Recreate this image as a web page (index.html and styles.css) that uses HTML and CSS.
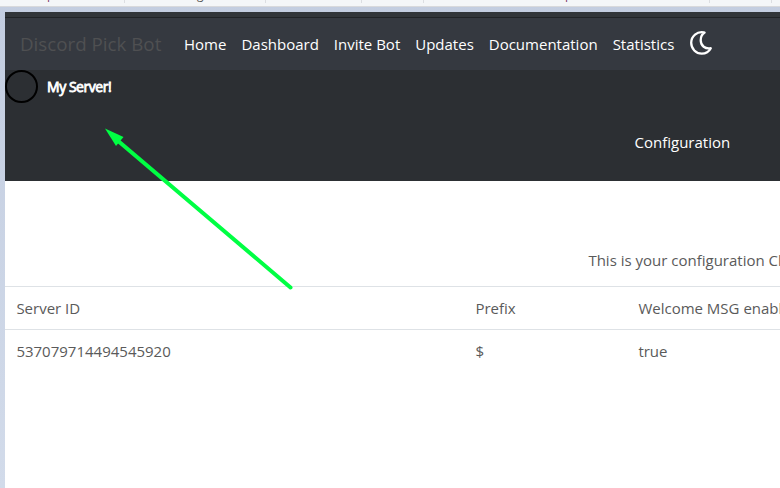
FILE: index.html
```html
<!DOCTYPE html>
<html lang="en">
<head>
<meta charset="utf-8">
<title>Discord Pick Bot</title>
<link rel="stylesheet" href="styles.css">
</head>
<body>
<div class="bookmarks">
  <span class="bookmark first">p</span>
  <span class="bookmark second">g</span>
  <span class="bookmark third"></span>
  <span class="bookmark fourth"></span>
  <span class="bookmark fifth">p</span>
  <span class="bookmark sixth"></span>
</div>
<main class="page">
  <div class="top-strip"></div>
  <nav class="navbar">
    <a class="brand">Discord Pick Bot</a>
    <div class="links">
      <a>Home</a><a>Dashboard</a><a>Invite Bot</a><a>Updates</a><a>Documentation</a><a>Statistics</a>
    </div>
    <svg class="moon" viewBox="0 0 24 26"><path d="M14.8 2.4C8.2 1.1 2.2 6 2.2 12.8c0 6 4.7 10.8 10.5 10.8 4.1 0 7.3-1.9 9.1-5.4-5.5 1.1-10.1-2.4-10.1-7.9 0-3.5 1.1-6 3.9-7.7Z"/></svg>
  </nav>
  <header class="server-header">
    <div class="server"><span class="avatar"></span><span class="server-name">My Server!</span></div>
    <a class="config-tab">Configuration</a>
  </header>
  <p class="intro">This is your configuration Click</p>
  <div class="table">
    <div class="row"><span>Server ID</span><span>Prefix</span><span>Welcome MSG enabled</span></div>
    <div class="row"><span>537079714494545920</span><span>$</span><span>true</span></div>
  </div>
</main>
<svg class="arrow" viewBox="0 0 780 488"><path class="shaft" d="M117 140L290.5 287.5"/><path class="head" d="M105 128.5L123.5 137 116 146Z"/></svg>
</body>
</html>
```
FILE: styles.css
```css
* { box-sizing: border-box; }
body {
  margin: 0;
  width: 780px;
  height: 488px;
  overflow: hidden;
  background: linear-gradient(#c3cde0, #d2dbea);
  font: 15px/21px "Open Sans", sans-serif;
  color: #5a5a5a;
}
.bookmarks {
  display: flex;
  height: 7px;
  overflow: hidden;
  background: #f4f6f8;
  border-bottom: 1px solid #d8d9dc;
}
.bookmark {
  height: 16px;
  margin-top: -13px;
  flex: none;
  overflow: hidden;
  border-right: 1px solid #dcdee2;
  font-size: 12px;
  line-height: 16px;
  color: #803a66;
}
.first { width: 125px; padding-left: 47px; }
.second { width: 141px; padding-left: 72px; color: #555; }
.third { width: 96px; }
.fourth { width: 62px; }
.fifth { width: 286px; padding-left: 141px; }
.sixth { width: 62px; }
.page {
  margin: 5px 0 0 5px;
  width: 775px;
  height: 476px;
  background: #fff;
  overflow: hidden;
}
.top-strip { height: 6px; background: #313539; border-bottom: 1px solid #202326; }
.navbar {
  display: flex;
  align-items: center;
  height: 52px;
  padding-left: 15px;
  background: #353940;
}
.brand { width: 164px; margin-top: -2px; font-size: 18.75px; color: #4f5052; white-space: nowrap; }
.links { display: flex; gap: 15px; color: #fff; white-space: nowrap; }
.moon { width: 24px; height: 26px; margin: -2px 0 0 15px; fill: none; stroke: #fff; stroke-width: 2.3; stroke-linejoin: round; }
.server-header { height: 111px; background: #2c2f33; color: #fff; }
.server { display: flex; height: 33px; align-items: center; gap: 9px; }
.server-name { font-size: 14px; letter-spacing: -.45px; -webkit-text-stroke: .8px #fff; margin-top: -1px; }
.avatar { width: 33px; height: 33px; border: 2px solid #000; border-radius: 50%; }
.config-tab { display: block; margin: 29px 0 0 629.5px; }
.intro { margin: 69px 0 15px 583.4px; white-space: nowrap; }
.row {
  display: grid;
  grid-template-columns: 459px 163px 1fr;
  height: 43px;
  padding: 11px 0 0 11.4px;
  border-top: 1px solid #dee2e6;
  white-space: nowrap;
}
.arrow { position: absolute; inset: 0; width: 780px; height: 488px; pointer-events: none; }
.shaft { stroke: #00ff43; stroke-width: 4; stroke-linecap: round; }
.head { fill: #00ff43; }
```
